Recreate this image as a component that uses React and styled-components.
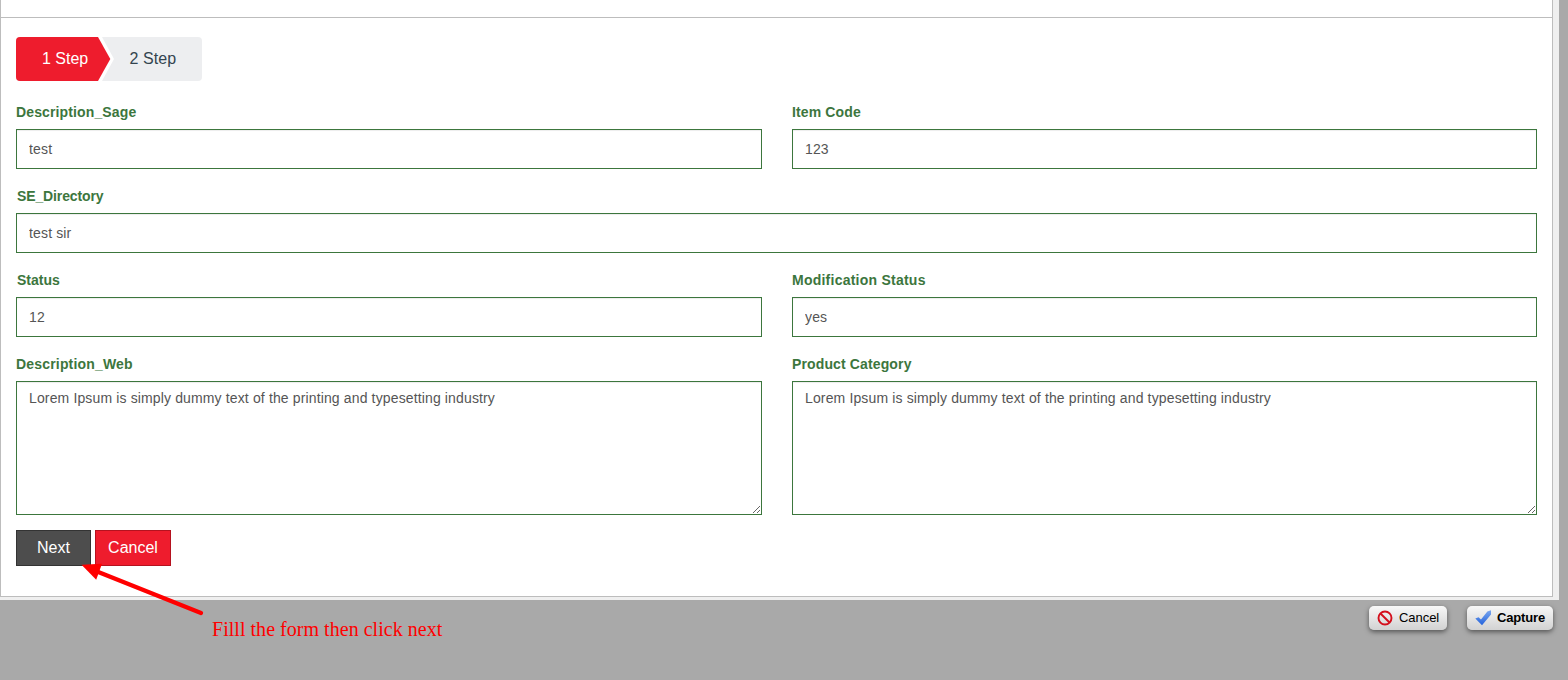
import React from "react";
import styled, { createGlobalStyle } from "styled-components";

const Global = createGlobalStyle`
  * { box-sizing: border-box; }
  body { margin: 0; background: #a9a9a9; font-family: "Liberation Sans", Arial, sans-serif; overflow: hidden; }
`;

const Screen = styled.div`
  position: relative;
  width: 1568px;
  height: 680px;
  background: #a9a9a9;
`;
const Selection = styled.div`
  width: 1559px;
  height: 600px;
  padding: 0 6px 3px 0;
  background: #efefef;
`;
const Panel = styled.main`
  height: 597px;
  background: #fff;
  border: 1px solid #bdbdbd;
  border-top: 0;
`;
const PanelHead = styled.div`
  height: 18px;
  border-bottom: 1px solid #bdbdbd;
`;
const PanelBody = styled.form`
  padding: 19px 15px 0;
`;
const Steps = styled.nav`
  display: flex;
  position: relative;
  width: 186px;
  height: 44px;
  border-radius: 4px;
  overflow: hidden;
  background: #edeef0;
  font-size: 16px;
  line-height: 43px;
`;
const ActiveStep = styled.span`
  position: relative;
  width: 82px;
  padding-left: 26px;
  background: #ee1c2d;
  color: #fff;
  white-space: nowrap;
`;
const NextStep = styled.span`
  padding-left: 31.5px;
  color: #33444f;
  letter-spacing: 0.1px;
`;
const Chevron = styled.svg`
  position: absolute;
  left: 82px;
  top: 0;
`;
const Grid = styled.div`
  display: grid;
  grid-template-columns: 746px 745px;
  column-gap: 30px;
  row-gap: 15px;
  margin-top: 19px;
`;
const Field = styled.div`
  grid-column: ${(p) => (p.$wide ? "1 / -1" : "auto")};
`;
const Label = styled.label`
  display: block;
  height: 29px;
  padding-left: ${(p) => p.$indent || 0}px;
  font-size: 14px;
  font-weight: 700;
  line-height: 24px;
  color: #3c763d;
  letter-spacing: ${(p) => p.$ls ?? 0.13}px;
`;
const Input = styled.input`
  display: block;
  width: 100%;
  height: 40px;
  margin: 0;
  padding: 0 12px;
  border: 1px solid #3c763d;
  border-radius: 0;
  outline: 0;
  background: #fff;
  box-shadow: inset 0 1px 1px rgba(0, 0, 0, 0.075);
  font: 14px "Liberation Sans", Arial, sans-serif;
  letter-spacing: 0.15px;
  color: #555;
`;
const TextArea = styled.textarea`
  display: block;
  width: 100%;
  height: 134px;
  margin: 0;
  padding: 6px 12px;
  border: 1px solid #3c763d;
  border-radius: 0;
  outline: 0;
  resize: vertical;
  background: #fff;
  box-shadow: inset 0 1px 1px rgba(0, 0, 0, 0.075);
  font: 14px/20px "Liberation Sans", Arial, sans-serif;
  letter-spacing: 0.137px;
  color: #555;
`;
const Actions = styled.div`
  display: flex;
  gap: 4px;
  margin-top: 15px;
`;
const Button = styled.button`
  width: ${(p) => p.$w}px;
  height: 36px;
  padding: 0 0 1px;
  border: 1px solid ${(p) => (p.$red ? "#b5121f" : "#333")};
  background: ${(p) => (p.$red ? "#ee1c2d" : "#4d4d4d")};
  color: #fff;
  font: 16px "Liberation Sans", Arial, sans-serif;
`;
const Arrow = styled.svg`
  position: absolute;
  left: 78px;
  top: 560px;
`;
const Note = styled.p`
  position: absolute;
  left: 212px;
  top: 617px;
  margin: 0;
  font: 20px/24px "Liberation Serif", "Times New Roman", serif;
  letter-spacing: 0.03px;
  color: #f00;
  white-space: nowrap;
`;
const CaptureBar = styled.div`
  display: flex;
  justify-content: flex-end;
  gap: 20px;
  padding: 6px 15px 0 0;
`;
const CaptureButton = styled.button`
  display: flex;
  align-items: center;
  gap: 6px;
  width: ${(p) => p.$w}px;
  height: 24px;
  padding: 0 0 1px 8px;
  border: 0;
  border-radius: 5px;
  background: linear-gradient(#f8f8f8, #d2d2d2);
  box-shadow: 0 2px 5px rgba(0, 0, 0, 0.5);
  color: #000;
  font: ${(p) => (p.$bold ? 700 : 400)} 13px "Liberation Sans", Arial, sans-serif;
  letter-spacing: ${(p) => (p.$bold ? -0.15 : -0.05)}px;
  white-space: nowrap;

  svg {
    position: relative;
    top: 0.5px;
  }
`;

const LOREM = "Lorem Ipsum is simply dummy text of the printing and typesetting industry";

export default function App() {
  return (
    <Screen>
      <Global />
      <Selection>
        <Panel>
          <PanelHead />
          <PanelBody>
            <Steps>
              <Chevron width="16" height="44" viewBox="0 0 16 44">
                <path d="M0 0H4L16 22L4 44H0Z" fill="#fff" />
                <path d="M0 0L12.3 22L0 44Z" fill="#ee1c2d" />
              </Chevron>
              <ActiveStep>1 Step</ActiveStep>
              <NextStep>2 Step</NextStep>
            </Steps>
            <Grid>
              <Field>
                <Label>Description_Sage</Label>
                <Input defaultValue="test" />
              </Field>
              <Field>
                <Label>Item Code</Label>
                <Input defaultValue="123" />
              </Field>
              <Field $wide>
                <Label $indent={1} $ls={-0.12}>SE_Directory</Label>
                <Input defaultValue="test sir" />
              </Field>
              <Field>
                <Label $indent={1} $ls={0}>Status</Label>
                <Input defaultValue="12" />
              </Field>
              <Field>
                <Label $ls={0.24}>Modification Status</Label>
                <Input defaultValue="yes" />
              </Field>
              <Field>
                <Label $ls={0.18}>Description_Web</Label>
                <TextArea defaultValue={LOREM} />
              </Field>
              <Field>
                <Label>Product Category</Label>
                <TextArea defaultValue={LOREM} />
              </Field>
            </Grid>
            <Actions>
              <Button type="button" $w={75}>Next</Button>
              <Button type="button" $w={76} $red>Cancel</Button>
            </Actions>
          </PanelBody>
        </Panel>
      </Selection>
      <CaptureBar>
        <CaptureButton $w={78}>
          <svg width="16" height="16" viewBox="0 0 16 16" fill="none" stroke="#d40f1c" strokeWidth="1.9">
            <circle cx="8" cy="8" r="6.5" />
            <path d="M3.5 3.5L12.5 12.5" />
          </svg>
          Cancel
        </CaptureButton>
        <CaptureButton $w={86} $bold>
          <svg width="16" height="16" viewBox="0 0 16 16">
            <defs>
              <linearGradient id="tick" x1="0" y1="0" x2="0" y2="1">
                <stop offset="0" stopColor="#7aa6ee" />
                <stop offset="1" stopColor="#2463dc" />
              </linearGradient>
            </defs>
            <path d="M0.3 8.6L3.6 7.2L6 9.4L12.4 1.6L16 0.3V4.6L7 15.3Z" fill="url(#tick)" />
          </svg>
          Capture
        </CaptureButton>
      </CaptureBar>
      <Arrow width="130" height="60" viewBox="0 0 130 60">
        <path d="M19 11.5L123 53" stroke="#f00" strokeWidth="4.3" strokeLinecap="round" />
        <path d="M3.5 4.8L24 3.8L18.2 19.8Z" fill="#f00" />
      </Arrow>
      <Note>Filll the form then click next</Note>
    </Screen>
  );
}
